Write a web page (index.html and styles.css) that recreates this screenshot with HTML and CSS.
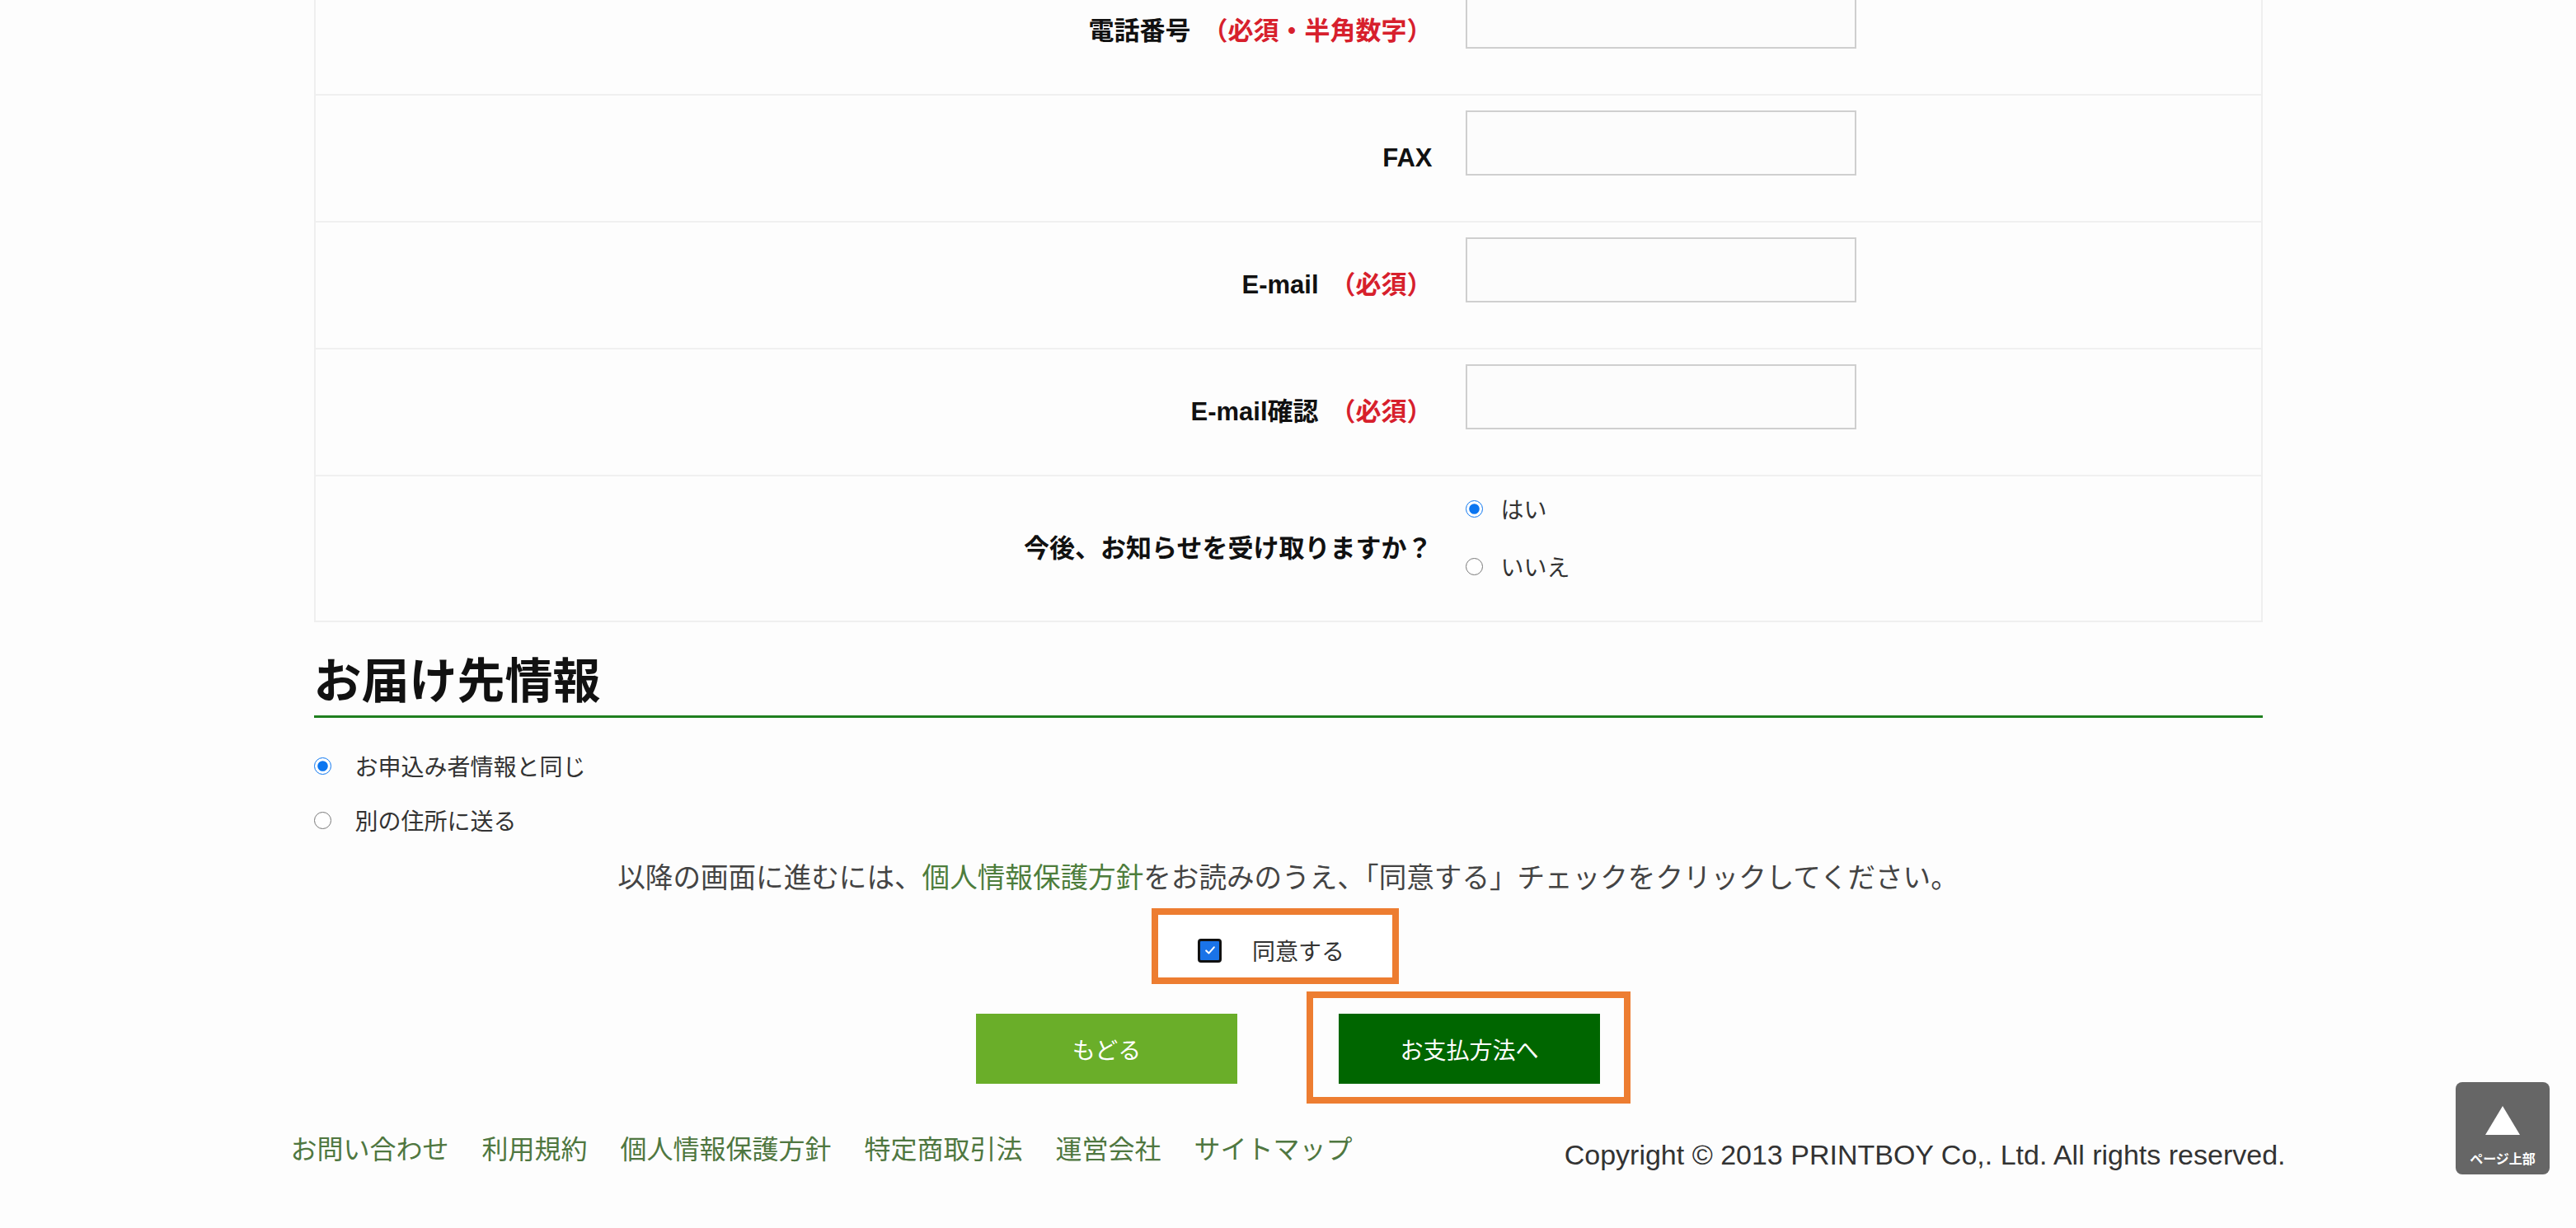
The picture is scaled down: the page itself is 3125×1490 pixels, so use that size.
FILE: index.html
```html
<!DOCTYPE html>
<html lang="ja">
<head>
<meta charset="utf-8">
<title>お申込み情報入力</title>
<link rel="stylesheet" href="styles.css">
</head>
<body>
<div class="page">
  <main class="container">
    <div class="form-table">
      <div class="form-row">
        <div class="form-label">電話番号<span class="req">（必須・半角数字）</span></div>
        <div class="form-value"><input class="text-input" type="text"></div>
      </div>
      <div class="form-row">
        <div class="form-label">FAX</div>
        <div class="form-value"><input class="text-input" type="text"></div>
      </div>
      <div class="form-row">
        <div class="form-label">E-mail<span class="req">（必須）</span></div>
        <div class="form-value"><input class="text-input" type="text"></div>
      </div>
      <div class="form-row">
        <div class="form-label">E-mail確認<span class="req">（必須）</span></div>
        <div class="form-value"><input class="text-input" type="text"></div>
      </div>
      <div class="form-row form-row-radio">
        <div class="form-label">今後、お知らせを受け取りますか？</div>
        <div class="form-value radio-group">
          <label class="radio"><input type="radio" name="news" checked><span>はい</span></label>
          <label class="radio"><input type="radio" name="news"><span>いいえ</span></label>
        </div>
      </div>
    </div>

    <h2 class="section-title">お届け先情報</h2>
    <div class="delivery-options">
      <label class="radio radio-delivery"><input type="radio" name="delivery" checked><span>お申込み者情報と同じ</span></label>
      <label class="radio radio-delivery"><input type="radio" name="delivery"><span>別の住所に送る</span></label>
    </div>

    <p class="notice">以降の画面に進むには、<a class="notice-link" href="#">個人情報保護方針</a>をお読みのうえ、「同意する」チェックをクリックしてください。</p>

    <div class="agree-row">
      <label class="agree-box">
        <span class="checkbox"><svg viewBox="0 0 20 20" width="16" height="16"><path d="M4 10.5 L8 14.5 L16 5.5" fill="none" stroke="#fff" stroke-width="2.6" stroke-linecap="round" stroke-linejoin="round"/></svg></span>
        <span class="agree-text">同意する</span>
      </label>
    </div>

    <div class="button-row">
      <a class="btn btn-back" href="#">もどる</a>
      <span class="btn-highlight"><a class="btn btn-next" href="#">お支払方法へ</a></span>
    </div>
  </main>

  <footer class="footer">
    <nav class="footer-links">
      <a href="#">お問い合わせ</a>
      <a href="#">利用規約</a>
      <a href="#">個人情報保護方針</a>
      <a href="#">特定商取引法</a>
      <a href="#">運営会社</a>
      <a href="#">サイトマップ</a>
    </nav>
    <p class="copyright">Copyright © 2013 PRINTBOY Co,. Ltd. All rights reserved.</p>
  </footer>

  <a class="page-top" href="#">
    <span class="page-top-arrow"></span>
    <span class="page-top-text">ページ上部</span>
  </a>
</div>
</body>
</html>
```

FILE: styles.css
```css
html, body {
  margin: 0;
  padding: 0;
}

body {
  background: #fdfdfd;
  color: #111;
  font-family: "Liberation Sans", "Noto Sans CJK JP", sans-serif;
  overflow: hidden;
}

a {
  text-decoration: none;
}

.container {
  width: 2364px;
  margin: 0 auto;
}

/* ---------- form table ---------- */
.form-table {
  margin-top: -38px;
  border-left: 2px solid #efefef;
  border-right: 2px solid #efefef;
  border-bottom: 2px solid #efefef;
  background: #fdfdfd;
}

.form-row {
  display: grid;
  grid-template-columns: 1395px 1fr;
  border-bottom: 2px solid #f0f0f0;
}

.form-row:last-child {
  border-bottom: none;
}

.form-label {
  align-self: center;
  padding-right: 40px;
  text-align: right;
  font-size: 31px;
  font-weight: bold;
  line-height: 1.4;
  color: #111;
}

.req {
  margin-left: 14px;
  color: #d7202c;
}

.form-value {
  padding: 18px 0 55px;
}

.text-input {
  display: block;
  box-sizing: border-box;
  width: 474px;
  height: 79px;
  margin: 0;
  border: 2px solid #cfcfcf;
  background: #fcfcfc;
}

.radio-group {
  display: flex;
  flex-direction: column;
  gap: 34px;
  padding: 21px 0 48px;
}

.radio {
  display: flex;
  align-items: center;
  height: 36px;
  font-size: 28px;
  color: #333;
}

.radio input {
  width: 21px;
  height: 21px;
  margin: 0 22px 0 0;
  accent-color: #0a75f0;
}

/* ---------- delivery ---------- */
.section-title {
  margin: 33px 0 0;
  padding-bottom: 2px;
  font-size: 58px;
  line-height: 78px;
  font-weight: bold;
  color: #111;
  border-bottom: 3px solid #1f7f1f;
}

.delivery-options {
  display: flex;
  flex-direction: column;
  gap: 26px;
  margin-top: 38px;
}

.radio-delivery {
  height: 40px;
}

.radio-delivery input {
  margin-right: 29px;
}

/* ---------- notice / agree ---------- */
.notice {
  margin: 27px 0 0;
  text-align: center;
  font-size: 33.6px;
  line-height: 48px;
  color: #444;
}

.notice-link {
  color: #4d7d3c;
}

.agree-row {
  display: flex;
  justify-content: center;
  margin-top: 12px;
}

.agree-box {
  display: flex;
  align-items: center;
  box-sizing: border-box;
  width: 300px;
  height: 92px;
  margin-right: 31px;
  padding: 10px 0 0 48px;
  border: 8px solid #ed7d31;
  background: #fff;
}

.checkbox {
  display: flex;
  align-items: center;
  justify-content: center;
  box-sizing: border-box;
  width: 29px;
  height: 29px;
  margin-right: 37px;
  border: 3px solid #111;
  border-radius: 4px;
  background: #1a73e8;
}

.agree-text {
  font-size: 28px;
  color: #333;
}

/* ---------- buttons ---------- */
.button-row {
  display: flex;
  justify-content: center;
  gap: 123px;
  margin-top: 36px;
}

.btn {
  display: flex;
  align-items: center;
  justify-content: center;
  width: 317px;
  height: 85px;
  font-size: 28px;
  color: #fff;
}

.btn-back {
  background: #6aae29;
}

.btn-next {
  background: #006600;
}

.btn-highlight {
  position: relative;
  display: block;
}

.btn-highlight::after {
  content: "";
  position: absolute;
  top: -27px;
  right: -37px;
  bottom: -24px;
  left: -39px;
  border: 8px solid #ed7d31;
  pointer-events: none;
}

/* ---------- footer ---------- */
.footer {
  display: flex;
  justify-content: space-between;
  align-items: flex-start;
  width: 2420px;
  margin: 56px auto 0;
}

.footer-links {
  display: flex;
  gap: 40px;
  font-size: 32px;
  line-height: 48px;
}

.footer-links a {
  color: #4f7740;
}

.copyright {
  margin: 10px 0 0;
  font-size: 34px;
  line-height: 40px;
  color: #333;
}

/* ---------- page top ---------- */
.page-top {
  position: fixed;
  right: 32px;
  bottom: 65px;
  width: 114px;
  height: 112px;
  border-radius: 8px;
  background: #666;
  display: flex;
  flex-direction: column;
  align-items: center;
}

.page-top-arrow {
  width: 0;
  height: 0;
  margin-top: 29px;
  border-left: 21px solid transparent;
  border-right: 21px solid transparent;
  border-bottom: 35px solid #fff;
}

.page-top-text {
  margin-top: 22px;
  font-size: 16px;
  font-weight: bold;
  color: #fff;
  line-height: 1;
}
```
